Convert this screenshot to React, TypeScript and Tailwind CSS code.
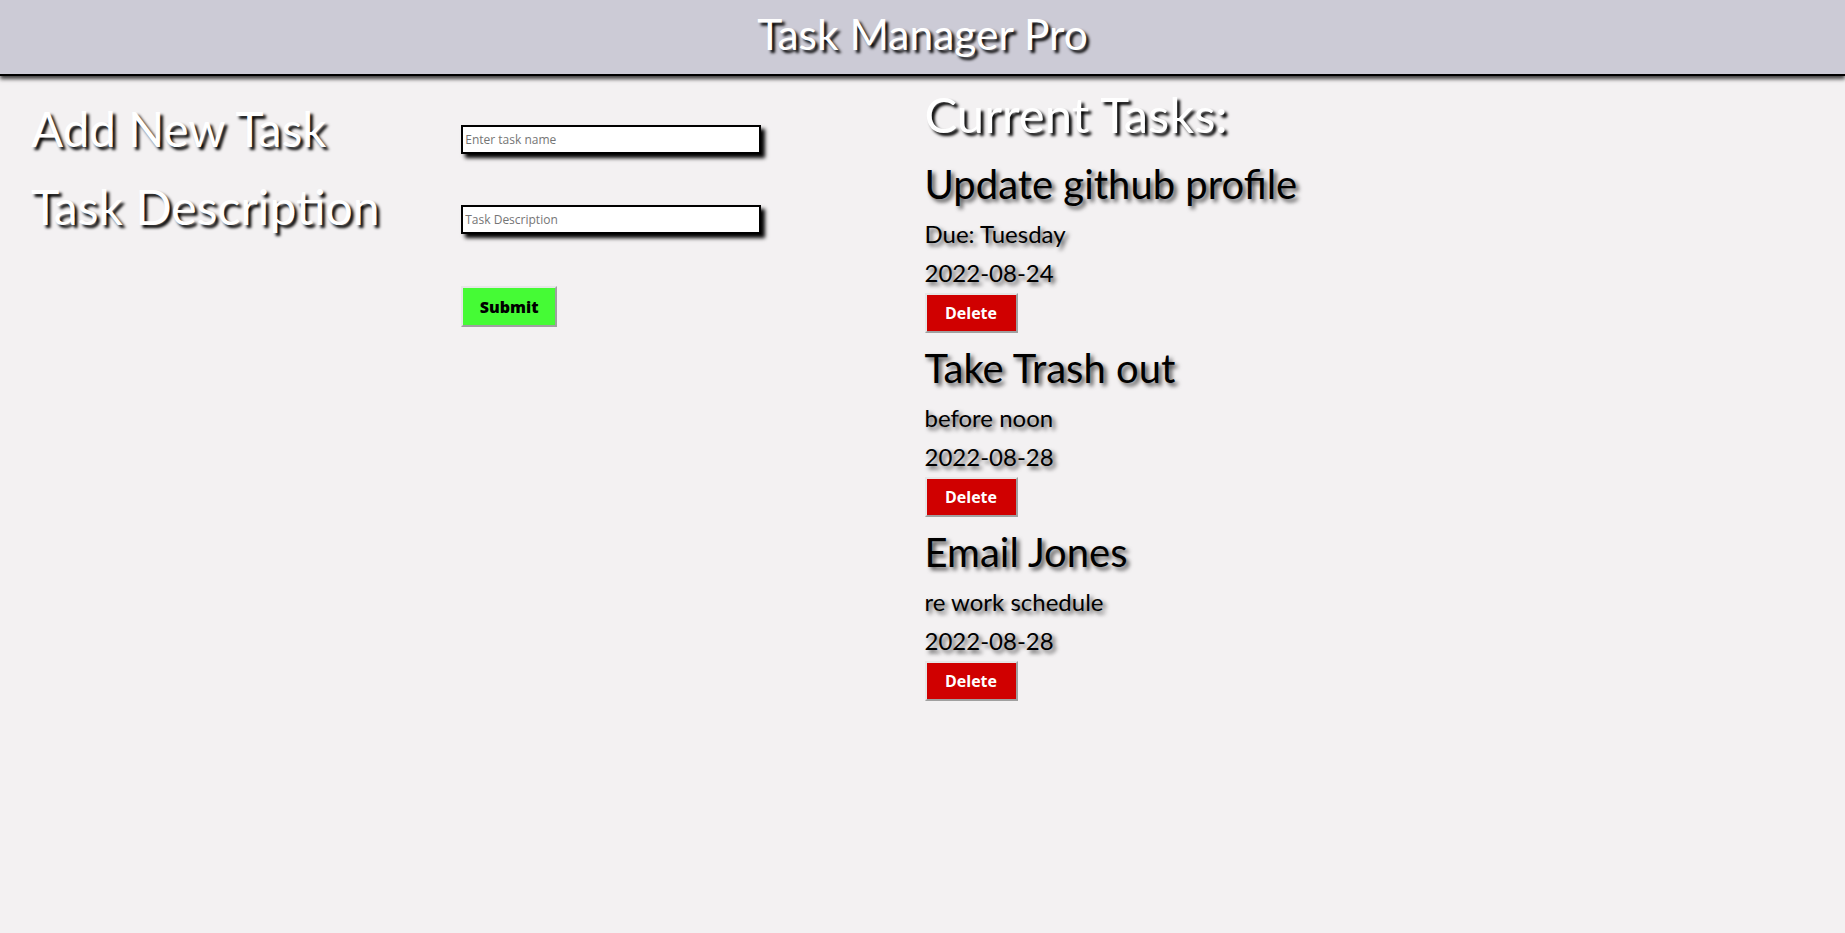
import { useState } from "react";

interface Task {
    id: number;
    title: string;
    description: string;
    date: string;
}

const initialTasks: Task[] = [
    { id: 1, title: "Update github profile", description: "Due: Tuesday", date: "2022-08-24" },
    { id: 2, title: "Take Trash out", description: "before noon", date: "2022-08-28" },
    { id: 3, title: "Email Jones", description: "re work schedule", date: "2022-08-28" },
];

export default function App() {
    const [tasks, setTasks] = useState<Task[]>(initialTasks);
    const [name, setName] = useState("");
    const [description, setDescription] = useState("");

    const handleSubmit = (e: React.FormEvent<HTMLFormElement>) => {
        e.preventDefault();
        if (!name.trim()) return;
        setTasks([
            ...tasks,
            { id: Date.now(), title: name, description, date: new Date().toISOString().slice(0, 10) },
        ]);
        setName("");
        setDescription("");
    };

    const handleDelete = (id: number) => {
        setTasks(tasks.filter((t) => t.id !== id));
    };

    return (
        <div className="min-h-screen bg-[#f3f1f2] font-['Lato',sans-serif]">
            {/* Header */}
            <header className="h-[76px] pb-[7px] bg-[#cccbd6] border-b-2 border-black shadow-[0_3px_4px_rgba(0,0,0,0.75)] flex items-center justify-center">
                <h1 className="text-[42.5px] leading-[48px] text-white [text-shadow:3px_3px_3px_#000]">
                    Task Manager Pro
                </h1>
            </header>

            <main className="grid grid-cols-2">
                {/* Add task form */}
                <form onSubmit={handleSubmit} className="grid grid-cols-2">
                    <div className="pl-[31px] pt-[24px] flex flex-col gap-[20px]">
                        <h2 className="text-[47.5px] leading-[58px] text-white [text-shadow:3px_3px_3px_#000]">
                            Add New Task
                        </h2>
                        <h2 className="text-[48px] leading-[58px] text-white [text-shadow:3px_3px_3px_#000]">
                            Task Description
                        </h2>
                    </div>
                    <div className="pt-[49px] flex flex-col items-start">
                        <input
                            type="text"
                            placeholder="Enter task name"
                            value={name}
                            onChange={(e) => setName(e.target.value)}
                            className="w-[300px] h-[29px] bg-white border-2 border-black px-0.5 text-[12px] font-['Open_Sans',sans-serif] placeholder:text-[#757575] shadow-[4px_4px_4px_#000] outline-none"
                        />
                        <input
                            type="text"
                            placeholder="Task Description"
                            value={description}
                            onChange={(e) => setDescription(e.target.value)}
                            className="mt-[51px] w-[300px] h-[29px] bg-white border-2 border-black px-0.5 text-[12px] font-['Open_Sans',sans-serif] placeholder:text-[#757575] shadow-[4px_4px_4px_#000] outline-none"
                        />
                        <button
                            type="submit"
                            className="mt-[52px] w-[96px] h-[41px] bg-[#45fb35] border-2 border-t-[#e6e6e6] border-l-[#e6e6e6] border-b-[#a0a0a0] border-r-[#a0a0a0] text-[16px] font-extrabold text-black font-['Open_Sans',sans-serif]"
                        >
                            Submit
                        </button>
                    </div>
                </form>

                {/* Task list */}
                <section className="pl-[2px] pt-[10px]">
                    <h2 className="text-[49px] leading-[56px] text-white [text-shadow:3px_3px_3px_#000]">
                        Current Tasks:
                    </h2>
                    <div className="mt-[17px] flex flex-col gap-[10px]">
                        {tasks.map((task) => (
                            <div key={task.id} className="flex flex-col items-start">
                                <h3 className="text-[40px] leading-[50px] text-black [text-shadow:3px_3px_4px_rgba(0,0,0,0.7)]">
                                    {task.title}
                                </h3>
                                <p className="mt-[5px] text-[24px] leading-[39px] text-black [text-shadow:3px_3px_4px_rgba(0,0,0,0.7)]">
                                    {task.description}
                                </p>
                                <p className="text-[24px] leading-[39px] text-black [text-shadow:3px_3px_4px_rgba(0,0,0,0.7)]">
                                    {task.date}
                                </p>
                                <button
                                    onClick={() => handleDelete(task.id)}
                                    className="mt-[1px] w-[93px] h-[40px] bg-[#d00000] border-2 border-t-[#e6e6e6] border-l-[#e6e6e6] border-b-[#a0a0a0] border-r-[#a0a0a0] text-[16px] font-bold text-white font-['Open_Sans',sans-serif]"
                                >
                                    Delete
                                </button>
                            </div>
                        ))}
                    </div>
                </section>
            </main>
        </div>
    );
}
